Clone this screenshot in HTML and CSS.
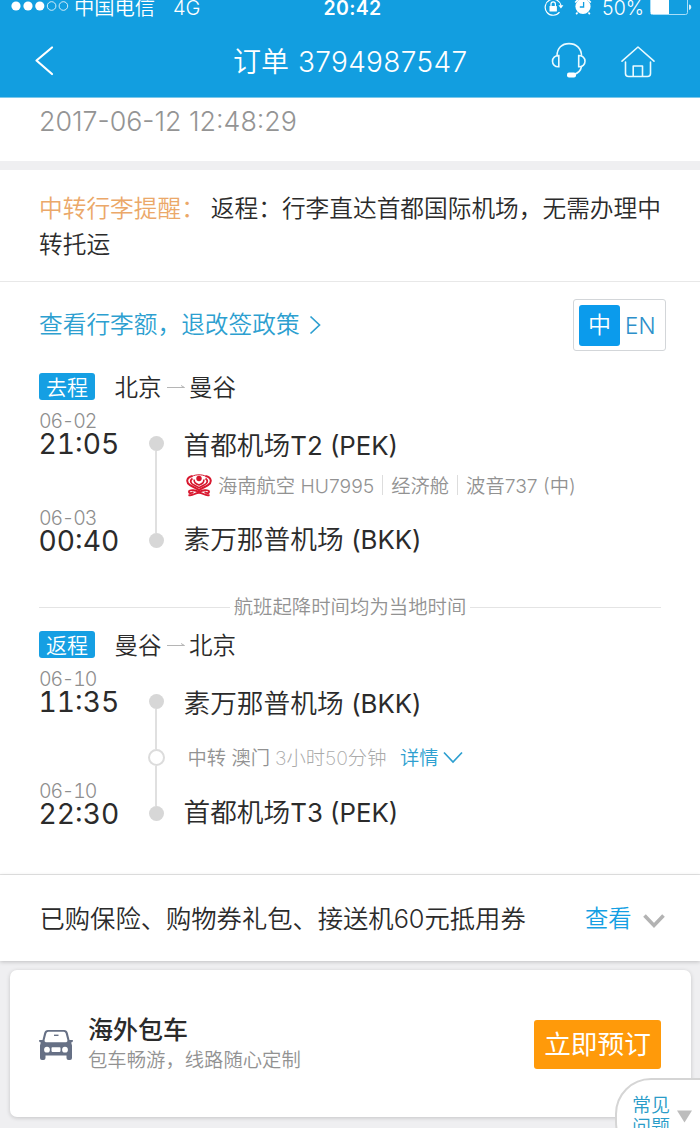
FILE: index.html
```html
<!DOCTYPE html>
<html lang="zh-CN">
<head>
<meta charset="utf-8">
<title>订单 3794987547</title>
<link rel="stylesheet" href="styles.css">
</head>
<body>
<div class="screen">
  <header class="topbar">
    <div class="status">
      <div class="status-left">
        <svg class="signal" width="58" height="12" viewBox="0 0 58 12"><g fill="#fff"><circle cx="5" cy="6" r="4.6"/><circle cx="17" cy="6" r="4.6"/><circle cx="28.8" cy="6" r="4.6"/></g><g fill="none" stroke="#fff" stroke-width=".8"><circle cx="40.6" cy="6" r="4.3"/><circle cx="52.4" cy="6" r="4.3"/></g></svg>
        <span class="carrier">中国电信</span>
        <span class="network">4G</span>
      </div>
      <div class="clock">20:42</div>
      <div class="status-right">
        <svg class="lock" width="20" height="20" viewBox="0 0 20 20" fill="none" stroke="#fff" stroke-width="1.2"><path d="M15.5 15.2A8 8 0 1 1 17 8.5"/><path d="M14.4 8.2h5l-2.5 3.2z" fill="#fff" stroke="none"/><rect x="5.5" y="9" width="7.4" height="5.6" rx=".6" fill="#fff" stroke="none"/><path d="M7 9V7a2.2 2.2 0 0 1 4.4 0v2"/></svg>
        <svg class="alarm" width="18" height="20" viewBox="0 0 18 20"><circle cx="9" cy="10.5" r="7.6" fill="#fff"/><path d="M1.2 6.5l4-4M16.8 6.5l-4-4M3.5 16.5l-1.3 1.8M14.5 16.5l1.3 1.8" stroke="#fff" stroke-width="1.7"/><path d="M9.6 6v5H5.8" fill="none" stroke="#129ee0" stroke-width="1.3"/></svg>
        <span class="percent">50%</span>
        <svg class="battery" width="42" height="20" viewBox="0 0 42 20"><rect x=".5" y="-3" width="37" height="17.500" rx="2" fill="none" stroke="#a9def8" stroke-width="1"/><path d="M1 0h18v14H1z" fill="#fff"/><path d="M39 4.500q2.200 0 2.200 2.700T39 10z" fill="#d8f1fd"/></svg>
      </div>
    </div>
    <nav class="nav">
      <svg class="back" width="20" height="32" viewBox="0 0 20 32" fill="none" stroke="#fff" stroke-width="2.2" stroke-linecap="round" stroke-linejoin="round"><path d="M18 2.500L2.500 15.500l15.500 13.500"/></svg>
      <h1 class="title">订单 <span class="order-no">3794987547</span></h1>
      <svg class="support" width="36" height="36" viewBox="0 0 36 36" fill="none" stroke="#e9faff" stroke-width="1.600" stroke-linecap="round"><path d="M6 14C6 6 11 1.600 18 1.600S30.500 6 30.500 14"/><path d="M7.800 13.500v11.300C4 25 1.500 22.600 1.500 19.200s2.500-5.800 6.300-5.700zM27.700 13.500v11.300c3.800.2 6.300-2.200 6.300-5.600s-2.500-5.800-6.300-5.700z"/><path d="M30.500 24.500c-.8 4.500-3.500 7-8 8"/><rect x="16" y="30.400" width="9" height="5" rx="2" fill="#fff" stroke="none"/></svg>
      <svg class="home" width="36" height="34" viewBox="0 0 36 34" fill="none" stroke="#e9faff" stroke-width="1.600" stroke-linecap="round" stroke-linejoin="round"><path d="M2 16.200L18 2l16 14.200M5.500 17v11.500q0 3 3 3h19q3 0 3-3V17M13.200 31V21h9.300v10"/></svg>
    </nav>
  </header>

  <section class="order-time">2017-06-12 12:48:29</section>

  <section class="notice"><span class="notice-label">中转行李提醒：</span><span class="notice-first">返程：行李直达首都国际机场，无需办理中</span><br>转托运</section>

  <section class="itinerary">
    <div class="policy-row">
      <a class="policy"><span>查看行李额，退改签政策</span><svg width="12" height="20" viewBox="0 0 12 20" fill="none" stroke="#2d9fd0" stroke-width="1.700"><path d="M1.500 1.500L10.500 10l-9 8.500"/></svg></a>
      <div class="lang"><span class="lang-on">中</span><span class="lang-off">EN</span></div>
    </div>

    <div class="route"><span class="tag">去程</span><span>北京</span><svg width="18" height="6" viewBox="0 0 18 6"><path d="M0 3.500h17.500L14 1.500" fill="none" stroke="#b5b5b5"/></svg><span>曼谷</span></div>
    <div class="leg">
      <div class="times">
        <div><div class="date">06-02</div><div class="time">21:05</div></div>
        <div><div class="date">06-03</div><div class="time">00:40</div></div>
      </div>
      <div class="rail"><i class="dot"></i><i class="line"></i><i class="dot"></i></div>
      <div class="stops">
        <div class="station">首都机场<span class="code">T2 (PEK)</span></div>
        <div class="flight">
          <svg class="airline" width="26" height="23" viewBox="0 0 26 23" fill="none" stroke="#d8182f"><path d="M6.500 2C0 3.500 0 8.500 4 11.200c3 2 6.500 2.600 9 5 2.500-2.400 6-3 9-5 4-2.700 4-7.700-2.500-9.200" stroke-width="2"/><path d="M6.500 4.500C3.500 6.500 4.500 9.500 8 11l5 2.800 5-2.800c3.500-1.500 4.500-4.500 1.500-6.500" stroke-width="1.700"/><path d="M8.300 5.500c-1 2.500 1.700 4.500 4.700 5.500 3-1 5.700-3 4.700-5.500" stroke-width="1.700"/><path d="M6 2.300C10 .3 16 .3 20 2.300" stroke-width="1"/><circle cx="13" cy="4.500" r="2.700" fill="#d4142c" stroke="none"/><path d="M2.500 17.500c2-2.300 7-1.300 10.500.5 3.500-1.800 8.500-2.800 10.500-.5M3 17.500c0 2.300 3.500 2 4 .3M23 17.500c0 2.300-3.500 2-4 .3M2.500 21c4.500 1.300 6.500-2.300 10.500-2.300s6 3.600 10.500 2.300" stroke-width="1.900"/></svg>
          <span>海南航空 <span class="flight-no">HU7995</span></span><i class="sep"></i><span>经济舱</span><i class="sep"></i><span>波音737 (中)</span>
        </div>
        <div class="station">素万那普机场 <span class="code">(BKK)</span></div>
      </div>
    </div>

    <div class="local-time"><span>航班起降时间均为当地时间</span></div>

    <div class="route"><span class="tag">返程</span><span>曼谷</span><svg width="18" height="6" viewBox="0 0 18 6"><path d="M0 3.500h17.500L14 1.500" fill="none" stroke="#b5b5b5"/></svg><span>北京</span></div>
    <div class="leg leg-return">
      <div class="times">
        <div><div class="date">06-10</div><div class="time">11:35</div></div>
        <div><div class="date">06-10</div><div class="time">22:30</div></div>
      </div>
      <div class="rail"><i class="dot"></i><i class="line"></i><i class="dot dot-open"></i><i class="line"></i><i class="dot"></i></div>
      <div class="stops">
        <div class="station">素万那普机场 <span class="code">(BKK)</span></div>
        <div class="transfer"><span>中转 澳门</span><span class="duration">3小时50分钟</span><a class="detail">详情</a><svg width="20" height="13" viewBox="0 0 20 13" fill="none" stroke="#2d9fd0" stroke-width="1.700"><path d="M1 1.500l9 9.500 9-9.500"/></svg></div>
        <div class="station">首都机场<span class="code">T3 (PEK)</span></div>
      </div>
    </div>
  </section>

  <section class="extras">
    <span class="extras-text">已购保险、购物券礼包、接送机60元抵用券</span>
    <a class="view">查看</a>
    <svg class="chevron" width="22" height="15" viewBox="0 0 22 15" fill="none" stroke="#b3b3b3" stroke-width="3.600"><path d="M1.500 1.500L11 11.500l9.500-10"/></svg>
  </section>

  <section class="card">
    <svg class="car" width="34" height="32" viewBox="0 0 34 32"><path fill="#667085" fill-rule="evenodd" d="M9 1h16q3 0 3.800 3l1.700 7h3q.5 0 .5.600 0 2-1.800 2l.8 3V29q0 2-2 2h-1.500q-2 0-2-2v-2.500h-21V29q0 2-2 2H3q-2 0-2-2V16.600l.8-3Q0 13.600 0 11.600 0 11 .5 11h3l1.700-7Q6 1 9 1zM9.300 2.800Q7.700 2.800 7.300 4.500L5.600 11q-.4 1.800 1.200 2.200h20.400q1.600-.4 1.200-2.200l-1.700-6.500q-.4-1.700-2-1.700zM8 17.800a2.900 2.900 0 1 0 0 5.800a2.900 2.900 0 1 0 0-5.800zM26 17.800a2.900 2.900 0 1 0 0 5.800a2.900 2.900 0 1 0 0-5.800zM13.300 18.300q-.8 0-.8.800v3q0 .8.800.800h7.400q.8 0 .8-.8v-3q0-.8-.8-.8z"/><path d="M15 6.300h4.500" stroke="#667085" stroke-width="1.400"/></svg>
    <div class="card-text">
      <div class="card-title">海外包车</div>
      <div class="card-sub">包车畅游，线路随心定制</div>
    </div>
    <button class="book">立即预订</button>
  </section>

  <aside class="faq">
    <div class="faq-text">常见<br>问题</div>
    <svg width="15" height="13" viewBox="0 0 15 13"><path d="M0 .5h15L7.500 12.500z" fill="#bdbdbd"/></svg>
  </aside>
</div>
</body>
</html>
```
FILE: styles.css
```css
* { box-sizing: border-box; }
body {
  margin: 0;
  background: #efeff1;
  color: #2b2b2b;
  font-family: Inter, "Noto Sans CJK SC", sans-serif;
  font-weight: 350;
}
svg { display: block; flex: none; }
.screen { position: relative; width: 700px; height: 1128px; overflow: hidden; background: #efeff1; }

.topbar { height: 98px; background: #129ee0; border-bottom: 1px solid #7cc8ea; color: #fff; }
.status { display: grid; grid-template-columns: 1fr 100px 1fr; height: 24px; line-height: 16px; font-size: 20px; white-space: nowrap; }
.status-left { display: flex; padding-left: 11px; }
.signal { margin-right: 5px; }
.carrier { width: 99px; font-size: 20.300px; line-height: 16px; }
.network { font-size: 20px; line-height: 16px; }
.clock { padding-left: 5px; text-align: center; font-weight: 600; font-size: 19.500px; letter-spacing: .3px; line-height: 16px; }
.status-right { display: flex; justify-content: flex-end; padding-right: 8px; }
.lock { margin: -3px 10px 0 0; }
.alarm { margin: -4px 10px 0 0; }
.percent { margin-right: 6px; font-size: 19.500px; line-height: 16px; }
.nav { display: flex; align-items: center; height: 73px; padding: 0 44px 0 34px; }
.title { flex: none; margin: 2px 0 0 179px; width: 236px; font-size: 28px; font-weight: 350; line-height: 40px; white-space: nowrap; }
.order-no { margin-left: 1px; letter-spacing: .35px; }
.support { margin: -2px 0 0 82px; }
.home { margin: 2px 0 0 33px; }

.order-time { height: 63px; padding: 4px 39px 0; background: #fff; color: #949494; font-size: 26.800px; line-height: 38px; }

.notice { height: 112px; margin-top: 9px; padding: 21px 0 0 39px; background: #fff; border-bottom: 1px solid #e8e8e8; font-size: 23.700px; line-height: 35.500px; white-space: nowrap; }
.notice-label { margin-right: 6px; color: #eba869; }

.itinerary { height: 593px; padding: 17px 39px 0; background: #fff; border-bottom: 1px solid #e6e6e6; }
.policy-row { display: flex; justify-content: space-between; align-items: center; height: 52px; margin-right: -5px; }
.policy { display: flex; align-items: center; gap: 9px; font-size: 23.700px; color: #2d9fd0; }
.policy span { margin-top: -4px; }
.lang { display: flex; align-items: center; width: 93px; height: 52px; padding-left: 5px; border: 1px solid #d3d6d9; border-radius: 3px; font-size: 23px; }
.lang-on { width: 41px; height: 41px; border-radius: 3px; background: #0b9bec; color: #fff; line-height: 41px; text-align: center; }
.lang-off { margin-left: 5px; color: #2d8fca; font-size: 22.500px; }

.route { display: flex; align-items: center; height: 28px; margin-top: 22px; font-size: 23.500px; line-height: 29px; }
.route svg { margin: 0 4.500px 0 5px; }
.tag { width: 56px; height: 27px; margin: -1px 19.500px 0 0; border-radius: 3px; background: #159fe3; color: #fff; font-size: 21px; line-height: 29px; text-align: center; }

.leg { display: flex; height: 147px; margin-top: 9px; }
.times { display: flex; flex-direction: column; justify-content: space-between; width: 109px; padding-bottom: 4px; font-variant-numeric: tabular-nums; }
.date { color: #8e8e8e; font-size: 19.500px; letter-spacing: -1.200px; line-height: 22px; }
.time { margin-left: -.5px; font-size: 28.200px; font-weight: 400; line-height: 24px; }
.rail { display: flex; flex-direction: column; align-items: center; width: 16px; padding: 26px 0 9px; }
.dot { width: 15px; height: 15px; border-radius: 50%; background: #d7d7d7; }
.dot-open { width: 17px; height: 17px; background: #fff; border: 2px solid #dcdcdc; }
.line { flex: 1; width: 2px; background: #e0e0e0; }
.stops { display: flex; flex-direction: column; justify-content: space-between; padding: 18px 0 0 19.500px; white-space: nowrap; }
.station { font-size: 26.700px; line-height: 34px; }
.code { font-size: 25.800px; font-weight: 400; }
.flight { display: flex; align-items: center; height: 24px; margin-bottom: 15px; color: #929292; font-size: 19.300px; }
.airline { margin: 0 6.500px 0 2px; }
.sep { width: 1px; height: 20px; margin: 0 8px; background: #ddd; }

.local-time { display: flex; align-items: center; gap: 4px; height: 24px; margin-top: 38px; color: #929292; font-size: 19.400px; white-space: nowrap; }
.local-time span { margin-top: -3px; }
.local-time::before, .local-time::after { content: ""; flex: 1; height: 1px; background: #e4e4e4; }
.local-time + .route { margin-top: 12px; }
.leg-return { height: 162px; }
.leg-return .rail { padding-bottom: 9px; }
.transfer { display: flex; align-items: center; height: 24px; margin-bottom: 2px; padding-left: 4px; color: #929292; font-size: 19.300px; }
.duration { margin-left: 5px; color: #aaa; font-weight: 200; }
.detail { margin: 0 4px 0 13.500px; color: #2d9fd0; }

.extras { position: relative; display: flex; align-items: center; height: 86px; padding: 0 35.500px 2px 39.500px; background: #fff; box-shadow: 0 1px 4px rgba(0, 0, 0, .2); white-space: nowrap; }
.extras-text { flex: 1; font-size: 25.300px; }
.view { color: #159fe3; font-size: 23.300px; }
.chevron { margin: 8px 0 0 11px; }

.card { display: flex; align-items: center; height: 147px; margin: 9px 9px 0 10px; padding: 1px 30px 0 29px; border-radius: 7px; background: #fff; box-shadow: 0 1px 4px rgba(0, 0, 0, .18); }
.car { margin-top: 1px; }
.card-text { flex: 1; margin: 0 0 0 15px; white-space: nowrap; }
.card-title { font-size: 25px; font-weight: 500; line-height: 32px; }
.card-sub { color: #929292; font-size: 19.350px; line-height: 28px; }
.book { width: 127px; height: 49px; padding: 0; border: 0; border-radius: 3px; background: #ff9a0a; color: #fff; font: 400 26.700px/49px Inter, "Noto Sans CJK SC", sans-serif; }

/* Floating help tab over the lower right corner */
.faq { position: absolute; left: 615px; top: 1078px; display: flex; width: 100px; height: 80px; padding: 15px 0 0 15px; border: 2px solid #d5d5d5; border-radius: 36px 0 0 36px; background: #fff; }
.faq-text { width: 45px; color: #2a9cc8; font-size: 19px; line-height: 22px; }
.faq svg { margin-top: 15px; }
```
